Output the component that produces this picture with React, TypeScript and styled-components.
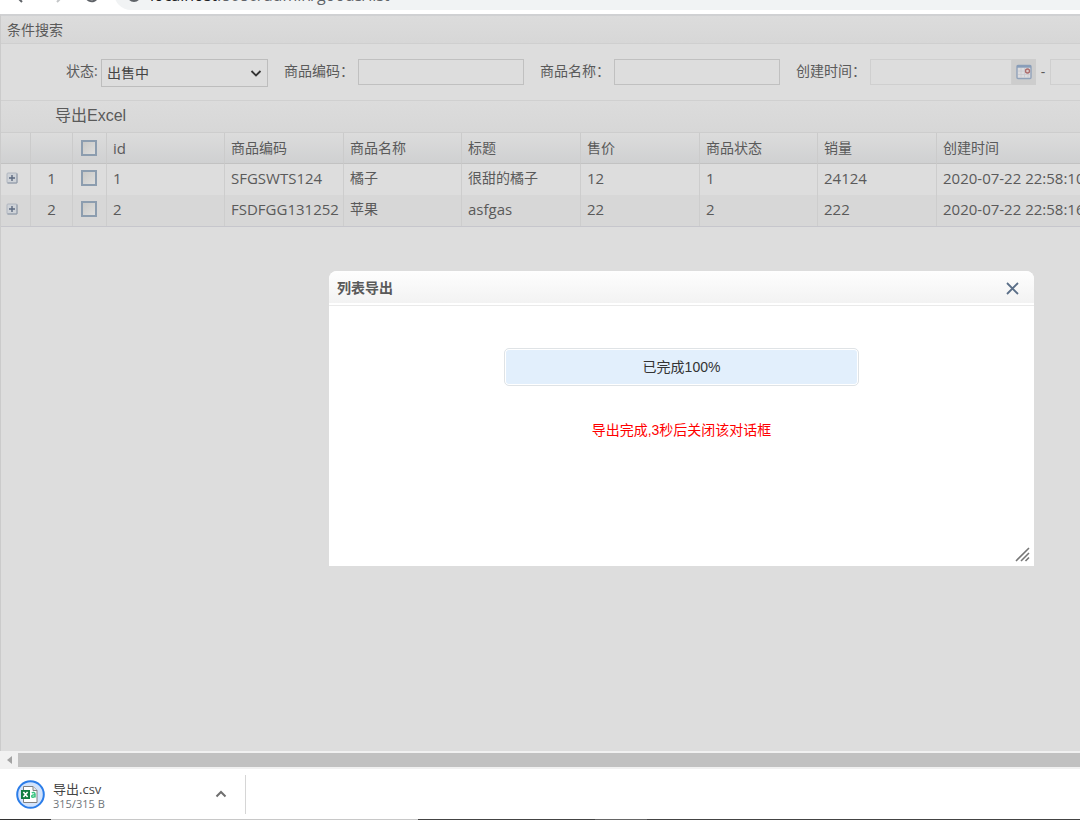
import React from "react";
import styled, { createGlobalStyle } from "styled-components";

const ui = `"Open Sans", "Noto Sans CJK SC", sans-serif`;
const plain = `"Liberation Sans", "Noto Sans CJK SC", sans-serif`;

const GlobalStyle = createGlobalStyle`
  *, *::before, *::after { box-sizing: border-box; }
  body { margin: 0; background: #fff; font-family: ${ui}; font-size: 14px; font-weight: 400; color: #5a5a5a; }
  button, input, select { font: inherit; color: inherit; }
`;

const Page = styled.div`
  display: flex;
  flex-direction: column;
  min-height: 100vh;
  overflow: hidden;
`;

const BrowserBar = styled.header`
  display: flex;
  align-items: flex-end;
  height: 14px;
  overflow: hidden;
  background: #fff;
`;

const NavButtons = styled.div`
  display: flex;
  gap: 20px;
  padding: 0 14px 10px 12px;
`;

const NavButton = styled.button<{ $dim?: boolean }>`
  display: flex;
  padding: 0;
  border: 0;
  background: none;
  color: ${(p) => (p.$dim ? "#c4c6c8" : "#5f6368")};
`;

const Omnibox = styled.div`
  flex: 1;
  display: flex;
  align-items: center;
  gap: 9px;
  height: 34px;
  margin: 0 0 4px;
  padding: 4px 14px 0 13px;
  border-radius: 17px 0 0 17px;
  background: #f1f3f4;
  color: #5f6368;
  font-size: 16px;
  line-height: 20px;
  white-space: nowrap;
`;

const Host = styled.span`
  color: #202124;
`;

const Main = styled.main`
  position: relative;
  flex: 1;
  display: flex;
  flex-direction: column;
  border-top: 2px solid #d0d1d3;
  border-left: 1px solid #cbcbcb;
  background: #ddd;
`;

const PanelTitle = styled.h1`
  margin: 0;
  padding: 0 6px;
  border-bottom: 1px solid #cfcfcf;
  background: linear-gradient(#dcdcdc, #d7d7d7);
  font-size: 14px;
  font-weight: 400;
  line-height: 27px;
`;

const SearchForm = styled.form`
  display: flex;
  align-items: flex-start;
  gap: 16px;
  height: 57px;
  padding: 15px 0 0 65px;
  overflow: hidden;
  border-bottom: 1px solid #d0d0d0;
`;

const Field = styled.div`
  display: flex;
  flex: none;
`;

const Label = styled.label<{ $short?: boolean }>`
  width: ${(p) => (p.$short ? 35 : 74)}px;
  line-height: 24px;
  white-space: nowrap;
`;

const SelectWrap = styled.div`
  position: relative;
  color: #444;

  svg {
    position: absolute;
    top: 10px;
    right: 6px;
    pointer-events: none;
  }
`;

const Select = styled.select`
  appearance: none;
  width: 167px;
  height: 28px;
  padding: 0 5px 2px;
  border: 1px solid #bdbdbd;
  border-radius: 0;
  background: #ddd;
`;

const TextInput = styled.input<{ $date?: boolean }>`
  width: ${(p) => (p.$date ? 142 : 166)}px;
  height: 26px;
  padding: 0 6px;
  border: 1px solid ${(p) => (p.$date ? "#cfcfcf" : "#c0c0c0")};
  border-radius: 0;
  background: #ddd;
`;

const DateButton = styled.button`
  display: flex;
  align-items: center;
  justify-content: center;
  width: 24px;
  height: 26px;
  padding: 0;
  border: 0;
  background: #cdcdcd;
`;

const Dash = styled.span`
  width: 14px;
  text-align: center;
  line-height: 25px;
`;

const Toolbar = styled.div`
  height: 32px;
  padding-left: 54px;
  border-bottom: 1px solid #cdcdcd;
  background: linear-gradient(#dcdcdc, #d7d7d7);
`;

const ToolButton = styled.button`
  padding: 0;
  border: 0;
  background: none;
  font-family: ${plain};
  font-size: 16px;
  line-height: 30px;
`;

const Grid = styled.table`
  width: 100%;
  table-layout: fixed;
  border-collapse: separate;
  border-spacing: 0;
  border-bottom: 1px solid #c6c6cc;
`;

const HeadRow = styled.tr`
  background: linear-gradient(#dcdcdc, #cfd0d1);
`;

const Row = styled.tr`
  &:nth-child(even) {
    background: #d7d7d7;
  }
`;

const HeadCell = styled.th<{ $latin?: boolean }>`
  height: 31px;
  padding: 0 6px;
  overflow: hidden;
  border-right: 1px solid #cbcbcb;
  border-bottom: 1px solid #c2c2c2;
  font-size: ${(p) => (p.$latin ? 15 : 14)}px;
  font-weight: 400;
  text-align: left;
  line-height: 20px;
  white-space: nowrap;

  &:last-child {
    border-right: 0;
  }
`;

const Cell = styled.td<{ $center?: boolean; $latin?: boolean }>`
  height: 31px;
  padding: ${(p) => (p.$center ? "0 0 4px" : "0 0 4px 6px")};
  overflow: hidden;
  border-right: 1px solid #cdcdcd;
  text-align: ${(p) => (p.$center ? "center" : "left")};
  font-size: ${(p) => (p.$latin ? 15 : 14)}px;
  line-height: 20px;
  white-space: nowrap;

  &:last-child {
    border-right: 0;
  }
`;

const Check = styled.input`
  appearance: none;
  display: block;
  width: 16px;
  height: 16px;
  margin: 0 0 0 8px;
  border: 2px solid #8c9daf;
  background: linear-gradient(135deg, #c9c9c7, #dededd);

  th & {
    margin-left: 2px;
  }
`;

const ExpandButton = styled.button`
  display: block;
  margin: 0 auto 0 5px;
  padding: 0;
  border: 0;
  background: none;
  line-height: 0;
`;

const Dialog = styled.section`
  position: absolute;
  top: 255px;
  left: 328px;
  right: 46px;
  height: 295px;
  display: flex;
  flex-direction: column;
  overflow: hidden;
  border-radius: 8px 8px 0 0;
  background: #fff;
`;

const DialogHeader = styled.header`
  display: flex;
  align-items: center;
  justify-content: space-between;
  height: 35px;
  padding: 0 15px 0 8px;
  border-bottom: 1px solid #eaeaea;
  box-shadow: inset 0 -2px #fff;
  background: linear-gradient(#fefefe, #f2f2f2);
`;

const DialogTitle = styled.h2`
  margin: 0;
  font-size: 14px;
  font-weight: 700;
  line-height: 20px;
`;

const IconButton = styled.button`
  display: flex;
  padding: 0;
  border: 0;
  background: none;
`;

const DialogBody = styled.div`
  flex: 1;
  display: flex;
  flex-direction: column;
  align-items: center;
  padding-top: 42px;
  font-family: ${plain};
`;

const Progress = styled.div`
  width: 355px;
  height: 38px;
  border: 1px solid #dfe3e6;
  border-radius: 5px;
  background: #e2effc;
  box-shadow: inset 0 0 0 1px #fff;
  color: #333;
  line-height: 37px;
  text-align: center;
`;

const Notice = styled.p`
  margin: 34px 0 0;
  color: #f00;
  line-height: 20px;
`;

const ResizeGrip = styled.svg`
  position: absolute;
  right: 4px;
  bottom: 4px;
`;

const ScrollBar = styled.div`
  display: flex;
  align-items: center;
  height: 18px;
  background: #f1f1f1;
`;

const ScrollArrow = styled.button`
  display: flex;
  align-items: center;
  justify-content: center;
  width: 18px;
  height: 18px;
  padding: 0;
  border: 0;
  background: none;
`;

const Thumb = styled.div`
  flex: 1;
  height: 14px;
  background: #c1c1c1;
`;

const Downloads = styled.footer`
  display: flex;
  align-items: center;
  height: 50px;
  background: #fff;
`;

const DownloadItem = styled.div`
  display: flex;
  align-items: center;
  gap: 8px;
  width: 246px;
  height: 39px;
  padding: 0 18px 0 16px;
  border-right: 1px solid #d6d6d6;
`;

const FileInfo = styled.div`
  flex: 1;
  padding-top: 4px;
`;

const FileName = styled.div`
  color: #444;
  font-size: 13px;
  line-height: 16px;
`;

const FileSize = styled.div`
  color: #70757a;
  font-size: 11px;
  line-height: 14px;
`;

const TaskbarEdge = styled.div`
  height: 1px;
  background: linear-gradient(
    to right,
    #333 51px,
    #c8c8c8 51px 418px,
    #444 418px 595px,
    #666 595px 647px,
    #444 647px
  );
`;

const columns = ["id", "商品编码", "商品名称", "标题", "售价", "商品状态", "销量", "创建时间"];
const widths = [30, 42, 34, 118, 119, 118, 119, 119, 118, 119];
const rows = [
  ["1", "SFGSWTS124", "橘子", "很甜的橘子", "12", "1", "24124", "2020-07-22 22:58:10"],
  ["2", "FSDFGG131252", "苹果", "asfgas", "22", "2", "222", "2020-07-22 22:58:16"],
];

const isLatin = (text: string) => /^[\x20-\x7e]+$/.test(text);

const PlusIcon = () => (
  <svg width="12" height="12" viewBox="0 0 12 12">
    <rect x="1" y="1" width="10" height="10" rx="1" fill="#cfd3d8" stroke="#b0b6bf" />
    <path d="M1.500 11H11V1.500" fill="none" stroke="#8d97a6" />
    <path d="M3 6H9M6 3V9" stroke="#5c6a80" strokeWidth="1.400" />
  </svg>
);

const CalendarIcon = () => (
  <svg width="16" height="16" viewBox="0 0 16 16">
    <rect x="1" y="1.5" width="14" height="13" rx="1" fill="#dcdcdf" stroke="#91a2ba" strokeWidth="1.4" />
    <path d="M1 2.5H15" stroke="#879db9" strokeWidth="2.4" />
    <path d="M2 7H14M2 10.5H14M5 4V14M8.5 4V14M12 4V14" stroke="#c9c9ce" strokeWidth=".8" />
    <circle cx="11.5" cy="7" r="2" fill="#dacccc" stroke="#ad6b6b" strokeWidth="1.3" />
  </svg>
);

const CsvIcon = () => (
  <svg width="29" height="29" viewBox="0 0 29 29">
    <circle cx="14.5" cy="14.5" r="13.3" fill="#d2e3fc" stroke="#2b7de9" strokeWidth="2" />
    <path d="M7.5 6.5H17L21 10.500V22.500H7.500Z" fill="#fff" stroke="#808080" />
    <path d="M17 6.500V10.500H21" fill="#e8e8e8" stroke="#808080" />
    <rect x="5" y="10" width="9" height="9" fill="#107c41" />
    <path d="M7.4 12L11.6 17M11.6 12L7.4 17" stroke="#fff" strokeWidth="1.6" />
    <path d="M15.8 13C16.8 12.2 19 12.1 19 14V17.5M19 14.8C17 14.6 15.6 15.2 15.7 16.3C15.900 17.800 18.200 17.500 19 16.200" fill="none" stroke="#39c481" strokeWidth="1.500" />
  </svg>
);

export default function App() {
  return (
    <Page>
      <GlobalStyle />
      <BrowserBar>
        <NavButtons>
          <NavButton aria-label="后退">
            <svg width="16" height="16" viewBox="0 0 16 16" fill="none" stroke="currentColor" strokeWidth="2">
              <path d="M15 8H4M10 2L4 8L10 14" />
            </svg>
          </NavButton>
          <NavButton aria-label="前进" $dim>
            <svg width="16" height="16" viewBox="0 0 16 16" fill="none" stroke="currentColor" strokeWidth="2">
              <path d="M2 8H15M9 2L15 8L9 14" />
            </svg>
          </NavButton>
          <NavButton aria-label="刷新">
            <svg width="16" height="16" viewBox="0 0 16 16" fill="none" stroke="currentColor" strokeWidth="2">
              <path d="M13.500 9A6 6 0 1 1 12 3M14 0V5H9" />
            </svg>
          </NavButton>
        </NavButtons>
        <Omnibox>
          <svg width="14" height="14" viewBox="0 0 14 14" fill="none" stroke="currentColor" strokeWidth="2">
            <circle cx="7" cy="7" r="6" />
            <path d="M7 6V10M7 3V5" />
          </svg>
          <span>
            <Host>localhost</Host>:8080/admin/goods/list
          </span>
        </Omnibox>
      </BrowserBar>

      <Main>
        <PanelTitle>条件搜索</PanelTitle>
        <SearchForm>
          <Field>
            <Label htmlFor="state" $short>状态:</Label>
            <SelectWrap>
              <Select id="state">
                <option>出售中</option>
              </Select>
              <svg width="12" height="9" viewBox="0 0 12 9" fill="none" stroke="#333" strokeWidth="1.800">
                <path d="M1.500 2L6 6.500L10.500 2" />
              </svg>
            </SelectWrap>
          </Field>
          <Field>
            <Label htmlFor="code">商品编码：</Label>
            <TextInput id="code" />
          </Field>
          <Field>
            <Label htmlFor="name">商品名称：</Label>
            <TextInput id="name" />
          </Field>
          <Field>
            <Label htmlFor="from">创建时间：</Label>
            <TextInput id="from" $date />
            <DateButton type="button" aria-label="选择日期">
              <CalendarIcon />
            </DateButton>
            <Dash>-</Dash>
            <TextInput id="to" aria-label="结束时间" $date />
          </Field>
        </SearchForm>
        <Toolbar>
          <ToolButton>导出Excel</ToolButton>
        </Toolbar>
        <Grid>
          <colgroup>
            {widths.map((w, i) => (
              <col key={i} width={w} />
            ))}
            <col />
          </colgroup>
          <thead>
            <HeadRow>
              <HeadCell />
              <HeadCell />
              <HeadCell>
                <Check type="checkbox" aria-label="全选" />
              </HeadCell>
              {columns.map((c) => (
                <HeadCell key={c} $latin={isLatin(c)}>{c}</HeadCell>
              ))}
            </HeadRow>
          </thead>
          <tbody>
            {rows.map((r) => (
              <Row key={r[0]}>
                <Cell $center>
                  <ExpandButton aria-label="展开">
                    <PlusIcon />
                  </ExpandButton>
                </Cell>
                <Cell $center $latin>{r[0]}</Cell>
                <Cell $center>
                  <Check type="checkbox" aria-label={`选择 ${r[0]}`} />
                </Cell>
                {r.map((v, i) => (
                  <Cell key={i} $latin={isLatin(v)}>{v}</Cell>
                ))}
              </Row>
            ))}
          </tbody>
        </Grid>

        <Dialog role="dialog" aria-labelledby="export-title">
          <DialogHeader>
            <DialogTitle id="export-title">列表导出</DialogTitle>
            <IconButton aria-label="关闭">
              <svg width="13" height="13" viewBox="0 0 13 13" fill="none" stroke="#5b6f88" strokeWidth="1.800">
                <path d="M1 1L12 12M12 1L1 12" />
              </svg>
            </IconButton>
          </DialogHeader>
          <DialogBody>
            <Progress role="progressbar" aria-valuenow={100}>已完成100%</Progress>
            <Notice>导出完成,3秒后关闭该对话框</Notice>
          </DialogBody>
          <ResizeGrip width="15" height="15" viewBox="0 0 15 15" stroke="#777" strokeWidth="1.600">
            <path d="M1 14L14 1M6 14L14 6M10.500 14L14 10.500" />
          </ResizeGrip>
        </Dialog>
      </Main>

      <ScrollBar>
        <ScrollArrow aria-label="向左滚动">
          <svg width="5" height="8" viewBox="0 0 5 8">
            <path d="M5 0V8L0 4Z" fill="#a3a3a3" />
          </svg>
        </ScrollArrow>
        <Thumb />
      </ScrollBar>
      <Downloads>
        <DownloadItem>
          <CsvIcon />
          <FileInfo>
            <FileName>导出.csv</FileName>
            <FileSize>315/315 B</FileSize>
          </FileInfo>
          <IconButton aria-label="更多操作">
            <svg width="12" height="8" viewBox="0 0 12 8" fill="none" stroke="#6f6f6f" strokeWidth="2">
              <path d="M1.500 6.500L6 2L10.500 6.500" />
            </svg>
          </IconButton>
        </DownloadItem>
      </Downloads>
      <TaskbarEdge />
    </Page>
  );
}
